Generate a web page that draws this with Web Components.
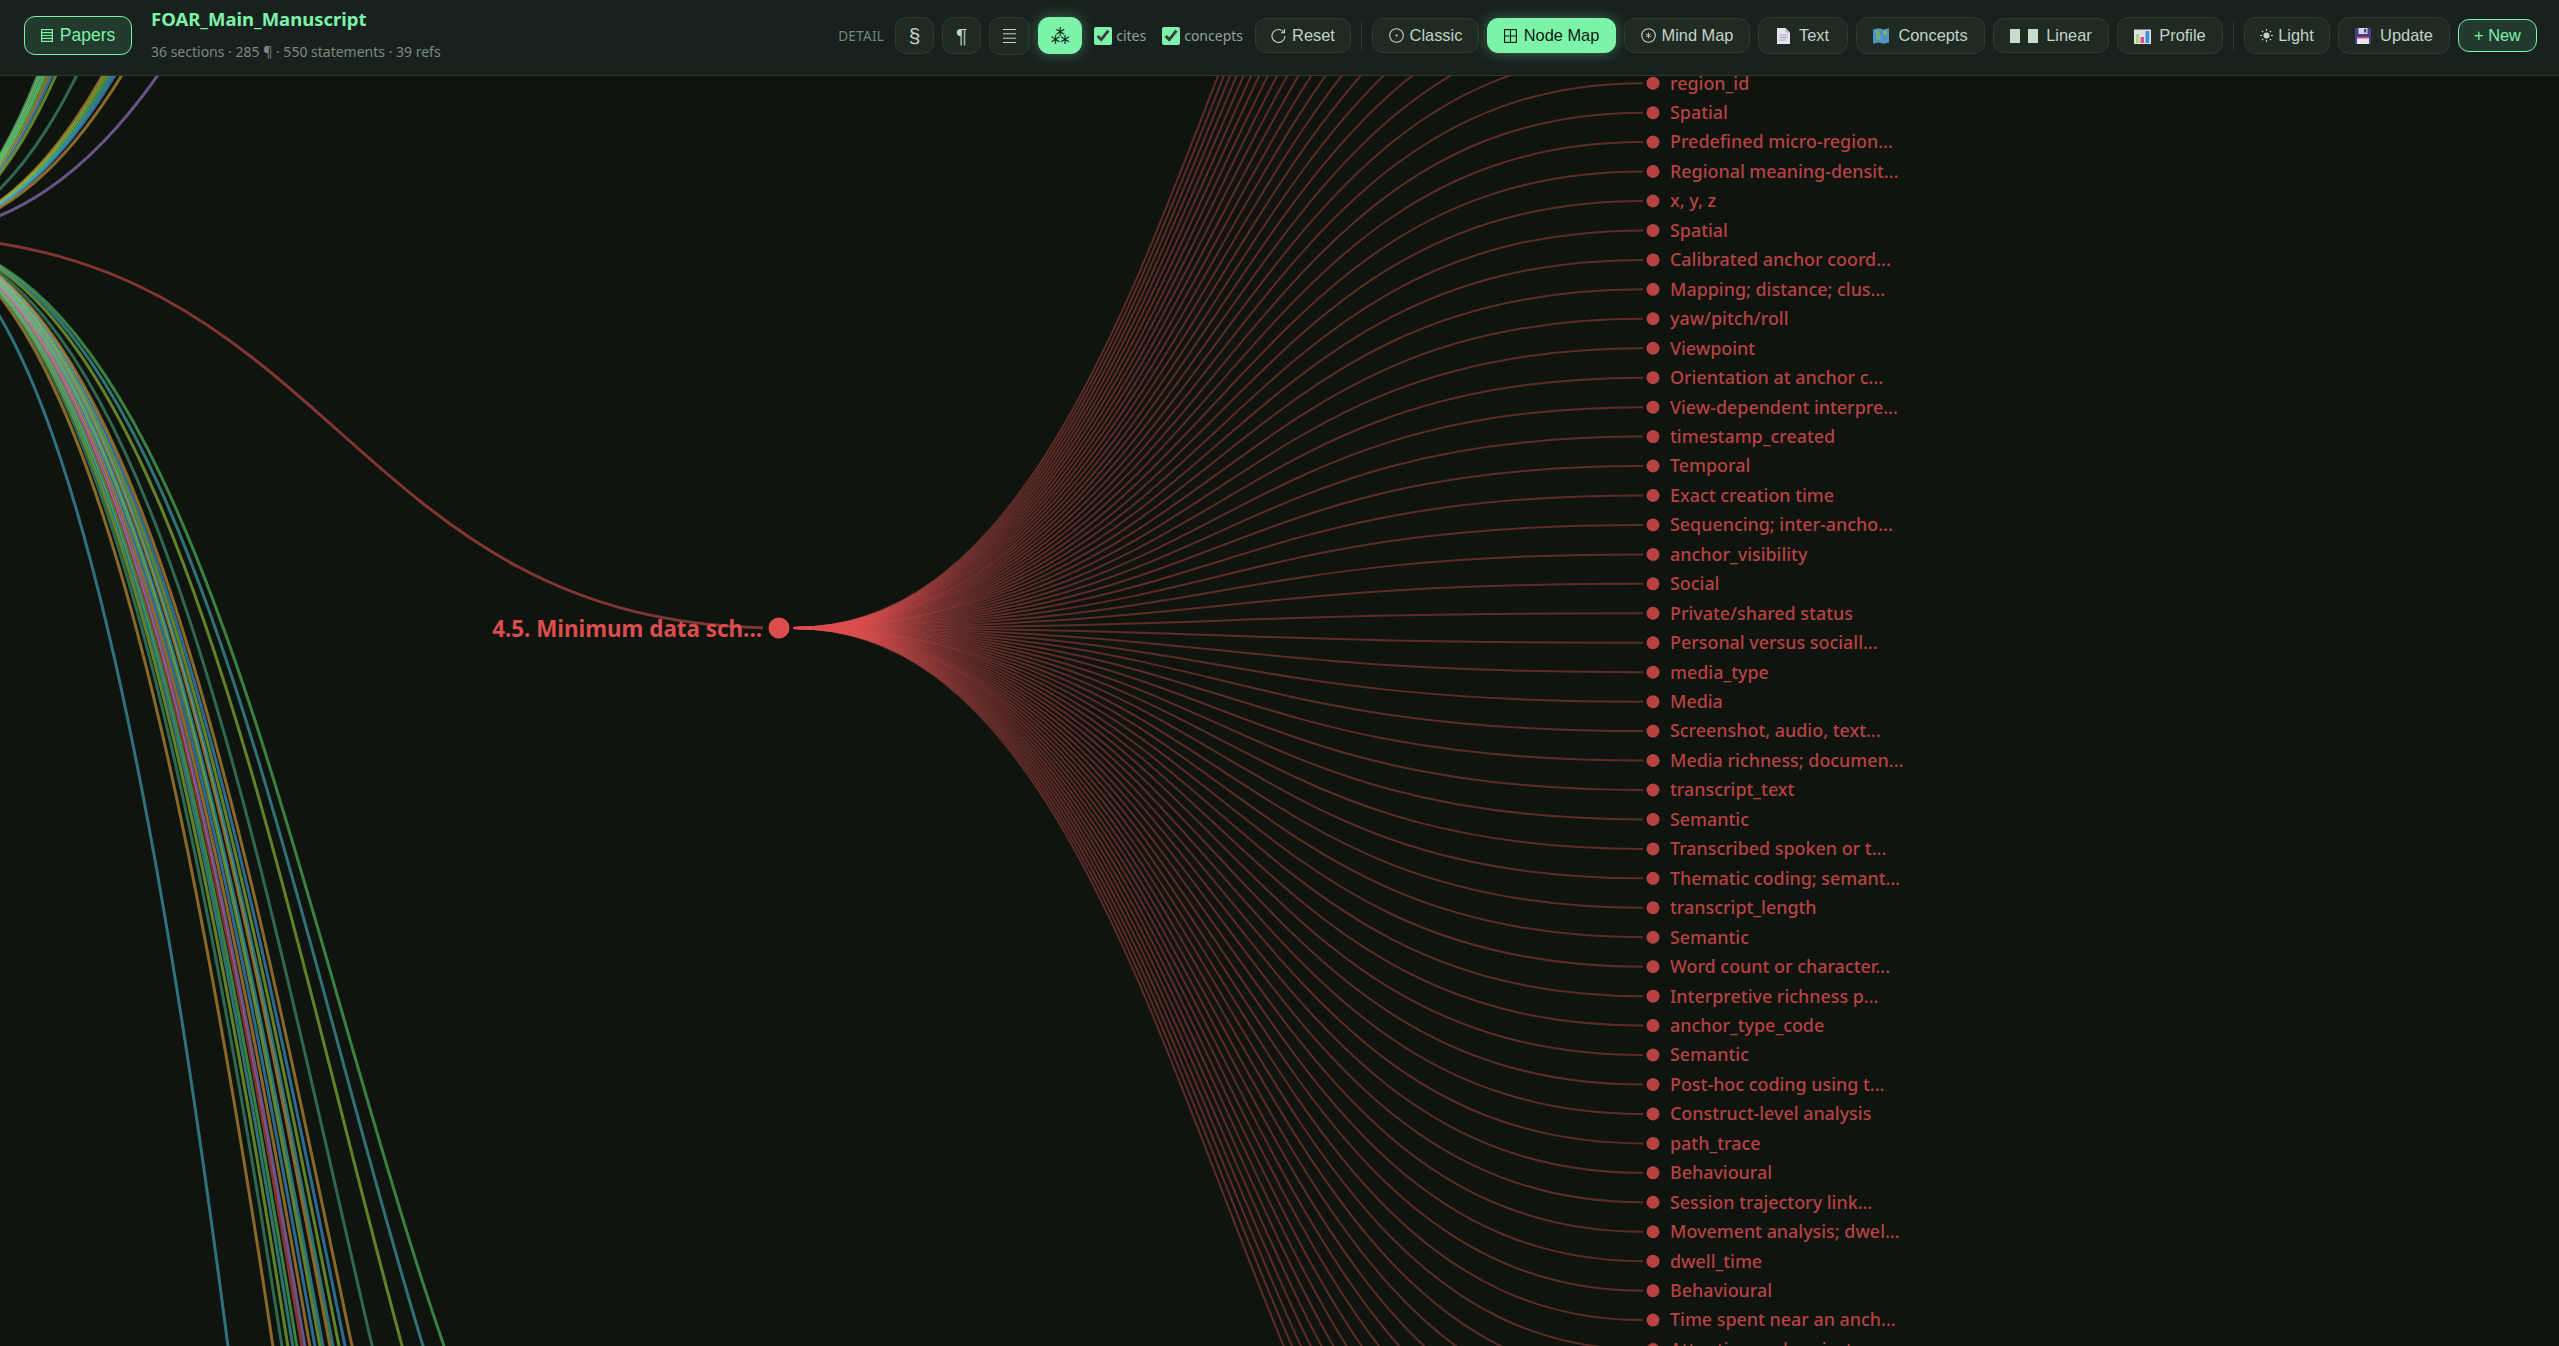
<!DOCTYPE html>
<html lang="en">
<head>
<meta charset="UTF-8">
<title>FOAR_Main_Manuscript</title>
<style>
  html, body { margin: 0; height: 100%; background: #0f140f; overflow: hidden; }
  body { display: flex; flex-direction: column; font-family: "Noto Sans", sans-serif; }
</style>
</head>
<body>
<top-bar>
  <tool-btn slot="left" kind="accent" style="width:108px;height:39px;gap:7px;font-size:17.5px">
    <svg slot="icon" width="12" height="13" viewBox="0 0 12 13" fill="none" stroke="currentColor" stroke-width="1.2"><rect x=".6" y=".6" width="10.8" height="11.8"/><path d="M1 3.600h10M1 6.500h10M1 9.400h10"/></svg>
    Papers
  </tool-btn>
  <doc-title slot="left" name="FOAR_Main_Manuscript" meta="36 sections · 285 ¶ · 550 statements · 39 refs"></doc-title>

  <span slot="right" style="font:13.5px 'Noto Sans',sans-serif;color:#6d8a7b;letter-spacing:.3px;margin-right:3px">DETAIL</span>
  <tool-btn slot="right" style="width:39px;height:37px;font-size:21px">§</tool-btn>
  <tool-btn slot="right" style="width:39px;height:37px;font-size:21px">¶</tool-btn>
  <tool-btn slot="right" style="width:41px;height:38px">
    <svg slot="icon" width="13" height="14" viewBox="0 0 13 14" stroke="currentColor" stroke-width="1" fill="none"><path d="M0 .5h13M0 4.800h13M0 9.200h13M0 13.500h13"/></svg>
  </tool-btn>
  <tool-btn slot="right" active style="width:44px;height:37px;font:19px 'DejaVu Sans',sans-serif">⁂</tool-btn>
  <check-opt slot="right" style="margin-left:4px">cites</check-opt>
  <check-opt slot="right" style="margin-left:8px">concepts</check-opt>
  <tool-btn slot="right" style="width:96px;height:35px;margin-left:4px">
    <svg slot="icon" width="15" height="15" viewBox="0 0 15 15" fill="none" stroke="currentColor" stroke-width="1.1"><path d="M13 4.500A6.500 6.500 0 1 0 14 8"/><path d="M10 4.700h3.500V1"/></svg>
    Reset
  </tool-btn>
  <bar-sep slot="right"></bar-sep>
  <tool-btn slot="right" style="width:107px;height:35px">
    <svg slot="icon" width="15" height="15" viewBox="0 0 15 15" fill="none" stroke="currentColor" stroke-width="1.1"><circle cx="7.500" cy="7.500" r="6.800"/><circle cx="7.500" cy="7.500" r="1.100" fill="currentColor" stroke="none"/></svg>
    Classic
  </tool-btn>
  <tool-btn slot="right" active style="width:129px;height:35px;gap:7px">
    <svg slot="icon" width="13" height="14" viewBox="0 0 13 14" fill="none" stroke="currentColor" stroke-width="1.100"><rect x=".6" y=".6" width="11.800" height="12.800"/><path d="M6.500 .6v12.800M.6 7h11.800"/></svg>
    Node Map
  </tool-btn>
  <tool-btn slot="right" style="width:126px;height:35px">
    <svg slot="icon" width="15" height="15" viewBox="0 0 15 15" fill="none" stroke="currentColor" stroke-width="1.100"><circle cx="7.500" cy="7.500" r="6.800"/><path d="M7.500 4.700v5.600M5.100 6.100l4.800 2.800M9.900 6.100l-4.800 2.800" stroke-width=".9"/></svg>
    Mind Map
  </tool-btn>
  <tool-btn slot="right" style="width:90px;height:37px;gap:9px">
    <svg slot="icon" width="13" height="16" viewBox="0 0 13 16"><path d="M0 0h8.500L13 4.500V16H0z" fill="#e6e2ee"/><path d="M8.500 0L13 4.500H8.500z" fill="#b8b4c4"/><path d="M2.500 6.500h8v1h-8zM2.500 9h8v1h-8zM2.500 11.500h6v1h-6z" fill="#a09cb0"/></svg>
    Text
  </tool-btn>
  <tool-btn slot="right" style="width:129px;height:37px;gap:9px">
    <svg slot="icon" width="16" height="16" viewBox="0 0 16 16"><path d="M0 1.500l5.300-1.300 5.400 1.300L16 .2V14.500l-5.300 1.300-5.400-1.300L0 15.800z" fill="#4f94c8"/><path d="M2 3l3-.8 2 1.800-1 3 2 2-1 3-3-.5-1-3.500 1-2zM10 3l4-.8v4l-2 1.500-2-1.500z" fill="#6fb86a"/></svg>
    Concepts
  </tool-btn>
  <tool-btn slot="right" style="width:116px;height:35px;gap:8px">
    <svg slot="icon" width="28" height="14" viewBox="0 0 28 14" fill="#c8dccc"><rect width="10" height="14"/><rect x="18" width="10" height="14"/></svg>
    Linear
  </tool-btn>
  <tool-btn slot="right" style="width:106px;height:37px;gap:8px">
    <svg slot="icon" width="17" height="16" viewBox="0 0 17 16"><path d="M0 1.500h17V16H0z" fill="#dfe3e6"/><rect x="2" y="6" width="3" height="9" fill="#b5d96a"/><rect x="6.500" y="9" width="3.500" height="6" fill="#e0508a"/><rect x="11.500" y="3" width="3.800" height="12" fill="#3f8fd8"/></svg>
    Profile
  </tool-btn>
  <bar-sep slot="right"></bar-sep>
  <tool-btn slot="right" style="width:86px;height:37px;gap:5px">
    <svg slot="icon" width="13" height="13" viewBox="0 0 13 13" fill="currentColor" stroke="currentColor" stroke-width="1.100"><circle cx="6.500" cy="6.500" r="3" stroke="none"/><path d="M6.500 0v2M6.500 11v2M0 6.500h2M11 6.500h2M1.800 1.800l1.400 1.400M9.800 9.800l1.400 1.400M1.800 11.200l1.400-1.400M9.800 3.200l1.400-1.400"/></svg>
    Light
  </tool-btn>
  <tool-btn slot="right" style="width:112px;height:37px;gap:9px">
    <svg slot="icon" width="16" height="16" viewBox="0 0 16 16"><path d="M0 0h15l1 1v15H0z" fill="#4a3f86"/><rect x="3.500" y="0" width="9" height="6" fill="#d8d6e6"/><rect x="9" y="1" width="2.300" height="3.500" fill="#4a3f86"/><rect x="2" y="9" width="12" height="7" fill="#e8e4f0"/><rect x="2" y="9" width="12" height="1.500" fill="#d0507a"/></svg>
    Update
  </tool-btn>
  <tool-btn slot="right" kind="accent" style="width:79px;height:33px">+ New</tool-btn>
</top-bar>
<node-map></node-map>

<script>
  // toolbar shell: two slots, left stuff and right stuff
  customElements.define('top-bar', class extends HTMLElement {
    connectedCallback() {
      this.attachShadow({ mode: 'open' })
      this.shadowRoot.innerHTML = `<style>
        :host { display: flex; align-items: center; height: 71px; flex: none;
          background: #18211e; border-bottom: 1px solid #2b372f; padding: 0 22px 4px 24px; position: relative; z-index: 2; }
        .l, .r { display: flex; align-items: center; }
        .l { gap: 19px; }
        .r { gap: 8px; margin-left: auto; }
      </style>
      <div class="l"><slot name="left"></slot></div>
      <div class="r"><slot name="right"></slot></div>`
    }
  })

  customElements.define('tool-btn', class extends HTMLElement {
    connectedCallback() {
      this.attachShadow({ mode: 'open' })
      this.shadowRoot.innerHTML = `<style>
        :host { display: inline-flex; align-items: center; justify-content: center; gap: 6px; box-sizing: border-box; flex: none;
          background: #1f2a23; border: 1px solid #2d3931; border-radius: 11px; color: #c3d3ca;
          font: 16.4px "Liberation Sans", sans-serif; white-space: nowrap; }
        :host([active]) { background: #7df2a9; border-color: #7df2a9; color: #0f1a14; box-shadow: 0 0 14px rgba(125,242,169,.35); }
        :host([kind=accent]) { background: #233a2e; border-color: #7df2a9; color: #7df2a9; }
        ::slotted(svg) { display: block; flex: none; }
      </style><slot name="icon"></slot><slot></slot>`
    }
  })

  customElements.define('doc-title', class extends HTMLElement {
    connectedCallback() {
      this.attachShadow({ mode: 'open' })
      this.shadowRoot.innerHTML = `<style>
        :host { display: block; margin-top: -3px; }
        .t { font: 700 18.5px "Noto Sans", sans-serif; color: #7df2a9; line-height: 24px; }
        .m { font: 14px "Noto Sans", sans-serif; color: #7a8a80; line-height: 18px; margin-top: 12px; }
      </style><div class="t">${this.getAttribute('name')}</div><div class="m">${this.getAttribute('meta')}</div>`
    }
  })

  customElements.define('check-opt', class extends HTMLElement {
    connectedCallback() {
      this.attachShadow({ mode: 'open' })
      this.shadowRoot.innerHTML = `<style>
        :host { display: inline-flex; align-items: center; gap: 4px; font: 14px "Noto Sans", sans-serif; color: #8fa398; }
        input { width: 18px; height: 18px; margin: 0; accent-color: #7df2a9; }
      </style><input type="checkbox" checked><slot></slot>`
    }
  })

  customElements.define('bar-sep', class extends HTMLElement {
    connectedCallback() {
      this.attachShadow({ mode: 'open' })
      this.shadowRoot.innerHTML = `<style>
        :host { display: block; width: 1px; height: 30px; background: #2b372f; margin: 0 2px; }
      </style>`
    }
  })

  // the map itself, a free canvas: everything is an svg coordinate
  const ROWS = ['region_id','Spatial','Predefined micro-region...','Regional meaning-densit...','x, y, z','Spatial',
    'Calibrated anchor coord...','Mapping; distance; clus...','yaw/pitch/roll','Viewpoint','Orientation at anchor c...',
    'View-dependent interpre...','timestamp_created','Temporal','Exact creation time','Sequencing; inter-ancho...',
    'anchor_visibility','Social','Private/shared status','Personal versus sociall...','media_type','Media',
    'Screenshot, audio, text...','Media richness; documen...','transcript_text','Semantic','Transcribed spoken or t...',
    'Thematic coding; semant...','transcript_length','Semantic','Word count or character...','Interpretive richness p...',
    'anchor_type_code','Semantic','Post-hoc coding using t...','Construct-level analysis','path_trace','Behavioural',
    'Session trajectory link...','Movement analysis; dwel...','dwell_time','Behavioural','Time spent near an anch...',
    'Attention and project...']

  const O='#f0ad3c', G='#5fd969', T='#48ad89', V='#a8dc3e', C='#4bbec8', B='#4bafff', R='#e05252', P='#b388f0', L='#7fe08a'
  // where each sibling section's link crosses the edge of the view
  const DOWN = [[228,'#4bbedc'],[273,O],[282,T],[288,V],[293,C],[297,G],[302,R],[305,P],[310,O],[315,B],[320,V],[323,C],
    [330,O],[333,C],[339,V],[345,B],[352,O],[372,T],[402,V],[423,C],[444,G]]
  const UP = [[38,L],[40,L],[42,G],[44,L],[46,G],[49,O],[52,B],[56,V],[77,T],[103,O],[106,V],[109,G],[112,C],[115,B],[122,O],[158,P]]

  customElements.define('node-map', class extends HTMLElement {
    connectedCallback() {
      const root = { x: -100, y: 236 }, sx = 779, sy = 628
      const mid = (root.x + sx) / 2
      const bx = t => root.x*(1-t)**3 + 3*mid*t*(1-t) + sx*t**3
      const tFor = x => { let a = 0, b = 1; for (let i = 0; i < 40; i++) { const m = (a+b)/2; bx(m) < x ? a = m : b = m } return a }
      const link = ([x, c], edge) => {
        const t = tFor(x), e = 3*t*t - 2*t*t*t
        const ty = root.y + (edge - root.y) / e
        return `<path d="M${root.x} ${root.y}C${mid} ${root.y} ${mid} ${ty} ${sx} ${ty}" stroke="${c}"/>`
      }
      let lines = DOWN.map(l => link(l, 1346)).join('') + UP.map(l => link(l, 75)).join('')
      lines += `<path d="M${root.x} ${root.y}C${mid} ${root.y} ${mid} ${sy} ${sx} ${sy}" stroke="${R}"/>`

      // 76 rows centred on the section, only some of them fall inside the view
      const gap = 29.45, n = 76, x0 = 793, x1 = 1643, m2 = (x0 + x1) / 2
      let fan = '', dots = '', labels = ''
      for (let i = 0; i < n; i++) {
        const y = sy + (i - (n - 1) / 2) * gap
        fan += `<path d="M${x0} ${sy}C${m2} ${sy} ${m2} ${y} ${x1} ${y}"/>`
        dots += `<circle cx="1653" cy="${y}" r="6.5"/>`
        const txt = ROWS[i - 19]
        if (txt) labels += `<text x="1670" y="${y - .6}">${txt}</text>`
      }

      this.attachShadow({ mode: 'open' })
      this.shadowRoot.innerHTML = `<style>
        :host { display: block; flex: 1; min-height: 0; overflow: hidden; background: #0f140f; }
        svg { display: block; width: 2559px; height: 1270px; }
        .links path { fill: none; stroke-width: 3; opacity: .55; }
        .fan path { fill: none; stroke: ${R}; stroke-width: 2; opacity: .38; }
        .dots { fill: #b84242; }
        .labels text { font: 500 17.9px "Noto Sans", sans-serif; fill: #b84242; dominant-baseline: central; }
        .main { font: 700 22.4px "Noto Sans", sans-serif; fill: #dc4e4e; dominant-baseline: central; text-anchor: end; }
      </style>
      <svg viewBox="0 76 2559 1270">
        <clipPath id="left-of-label"><rect x="-200" y="0" width="963" height="1400"/></clipPath>
        <g class="links" clip-path="url(#left-of-label)">${lines}</g>
        <g class="fan">${fan}</g>
        <g class="dots">${dots}</g>
        <g class="labels">${labels}</g>
        <circle cx="779" cy="628" r="10.5" fill="#dc4e4e"/>
        <text class="main" x="762" y="628">4.5. Minimum data sch...</text>
      </svg>`
    }
  })
</script>
</body>
</html>
